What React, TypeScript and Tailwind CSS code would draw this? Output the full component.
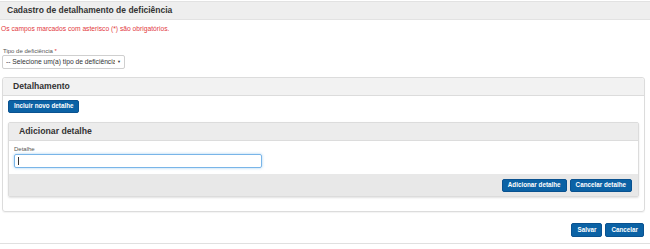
import React from "react";

const Btn = ({ children, className = "" }: { children: React.ReactNode; className?: string }) => (
  <button
    className={`h-[13px] px-[5px] bg-[#0b62a5] border border-[#0a5290] rounded-[2px] text-white text-[6.3px] font-bold leading-none flex items-center ${className}`}
  >
    {children}
  </button>
);

export default function App() {
  return (
    <div className="w-[650px] h-[249px] bg-white overflow-hidden font-['Liberation_Sans',Arial,sans-serif] text-[#333]">
      <div className="mt-[1px] h-[19px] border-t border-b border-[#e2e2e2] bg-[#eeeeee] flex items-center pl-[7px]">
        <span className="text-[8.5px] font-bold text-[#333]">Cadastro de detalhamento de deficiência</span>
      </div>
      <div className="mt-[4px] h-[9px] pl-[1px] text-[6.7px] leading-[9px] text-[#e2383d]">
        Os campos marcados com asterisco (*) são obrigatórios.
      </div>
      <div className="mt-[14px] h-[8px] pl-[3px] text-[6px] leading-[8px] text-[#555]">
        Tipo de deficiência <span className="text-[#e2383d]">*</span>
      </div>
      <div className="ml-[2px] w-[123px] h-[14px] border border-[#cfcfcf] rounded-[2px] flex items-center pl-[3px] pr-[3px] text-[6.7px] text-[#333]">
        <span className="flex-1 overflow-hidden whitespace-nowrap">-- Selecione um(a) tipo de deficiência</span>
        <span className="ml-[2px] text-[4px]">▼</span>
      </div>

      <div className="mt-[8px] ml-[2px] w-[643px] border border-[#dcdcdc] rounded-[3px] shadow-[0_1px_1px_rgba(0,0,0,0.05)]">
        <div className="h-[18px] bg-[#f2f2f2] border-b border-[#dcdcdc] flex items-center pl-[10px] rounded-t-[3px]">
          <span className="text-[8.6px] font-bold text-[#333]">Detalhamento</span>
        </div>
        <div className="px-[5px] pt-[4px] pb-[14px]">
          <Btn className="h-[12px] px-[4.5px]">Incluir novo detalhe</Btn>
          <div className="mt-[9px] border border-[#dcdcdc] rounded-[2px] shadow-[0_1px_2px_rgba(0,0,0,0.12)]">
            <div className="h-[18px] bg-[#ececec] border-b border-[#dcdcdc] flex items-center pl-[10px]">
              <span className="text-[8.7px] font-bold text-[#333]">Adicionar detalhe</span>
            </div>
            <div className="px-[5px] pt-[4px] pb-[6px]">
              <div className="h-[9px] text-[6px] leading-[8px] text-[#555]">Detalhe</div>
              <div className="w-[248px] h-[14px] border border-[#79b5e8] rounded-[2px] shadow-[0_0_3px_rgba(102,175,233,0.6)] flex items-center pl-[3px]">
                <span className="w-[1px] h-[8px] bg-[#333]" />
              </div>
            </div>
            <div className="h-[22px] bg-[#e8e8e8] flex items-center justify-end gap-[3px] pr-[6px]">
              <Btn>Adicionar detalhe</Btn>
              <Btn>Cancelar detalhe</Btn>
            </div>
          </div>
        </div>
      </div>

      <div className="mt-[11px] flex justify-end gap-[3px] pr-[6px]">
        <Btn className="h-[14px]">Salvar</Btn>
        <Btn className="h-[14px]">Cancelar</Btn>
      </div>
      <div className="mt-[6px] border-t border-[#e0e0e0]" />
    </div>
  );
}
